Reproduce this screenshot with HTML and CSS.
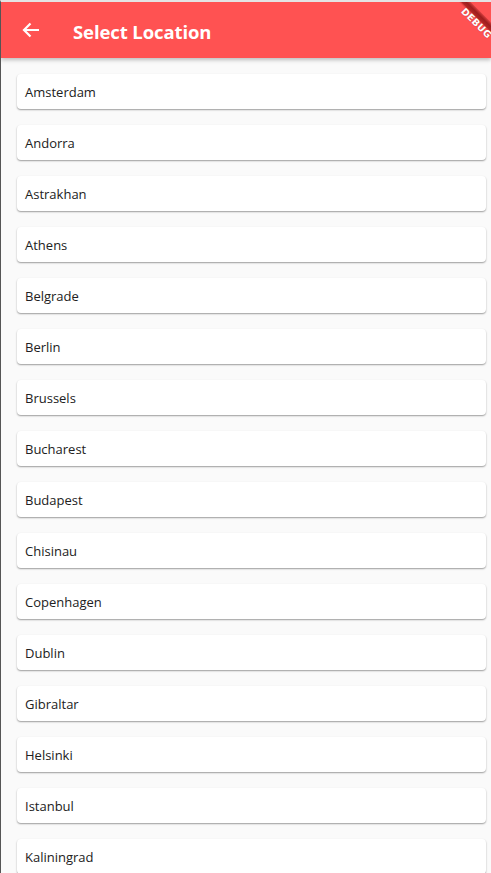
FILE: index.html
```html
<!DOCTYPE html>
<html>
<head>
<meta charset="utf-8">
<link rel="stylesheet" href="styles.css">
</head>
<body>
<div class="frame">
  <header class="appbar">
    <svg class="back" width="18" height="16" viewBox="0 0 18 16"><path d="M17 8H2.5M8.5 1.5L2 8l6.5 6.5" fill="none" stroke="#fff" stroke-width="2.2"/></svg>
    <h1 class="title">Select Location</h1>
    <div class="banner"><span>DEBUG</span></div>
  </header>
  <main class="list">
    <div class="card">Amsterdam</div>
    <div class="card">Andorra</div>
    <div class="card">Astrakhan</div>
    <div class="card">Athens</div>
    <div class="card">Belgrade</div>
    <div class="card">Berlin</div>
    <div class="card">Brussels</div>
    <div class="card">Bucharest</div>
    <div class="card">Budapest</div>
    <div class="card">Chisinau</div>
    <div class="card">Copenhagen</div>
    <div class="card">Dublin</div>
    <div class="card">Gibraltar</div>
    <div class="card">Helsinki</div>
    <div class="card">Istanbul</div>
    <div class="card">Kaliningrad</div>
  </main>
</div>
</body>
</html>
```
FILE: styles.css
```css
html, body {
  margin: 0;
  padding: 0;
  background: #fafafa;
}
body {
  width: 491px;
  height: 873px;
  overflow: hidden;
  font-family: "Open Sans", "Noto Sans", sans-serif;
}
.frame {
  border-top: 2px solid #e4e4e4;
  border-left: 1px solid #555;
  height: 871px;
  overflow: hidden;
  position: relative;
  background: #fafafa;
}
.appbar {
  position: relative;
  height: 56px;
  background: #ff5252;
  display: flex;
  align-items: center;
  box-shadow: 0 2px 4px rgba(0,0,0,0.25);
  z-index: 2;
  overflow: hidden;
}
.back {
  margin-left: 21px;
  margin-top: 0;
}
.title {
  margin: 2px 0 0 33px;
  color: #fff;
  font-size: 18.5px;
  font-weight: 700;
  letter-spacing: -0.1px;
}
.banner {
  position: absolute;
  left: 427px;
  top: 11px;
  width: 100px;
  height: 17px;
  background: linear-gradient(to bottom, rgba(120, 15, 15, 0.3) 0, rgba(140, 20, 20, 0.85) 3px, rgba(150, 22, 22, 0.75) 6px, rgba(150,22,22,0.2) 7.5px, transparent 8.5px);
  transform: rotate(45deg);
  display: flex;
  align-items: flex-end;
  justify-content: center;
  box-sizing: border-box;
  padding-bottom: 1px;
}
.banner span {
  color: #fff;
  font-size: 9.5px;
  font-weight: 700;
  letter-spacing: 0.2px;
  line-height: 10px;
  font-family: "DejaVu Sans", sans-serif;
  text-shadow: 0 0 1px rgba(120,0,0,0.6);
}
.list {
  display: flex;
  flex-direction: column;
  gap: 16px;
  padding: 16px 5px 0 16px;
}
.card {
  height: 35px;
  background: #fff;
  border-radius: 4px;
  box-shadow: 0 1px 2px rgba(0,0,0,0.28), 0 1px 1px rgba(0,0,0,0.12);
  display: flex;
  align-items: center;
  padding-left: 8px;
  font-size: 13px;
  color: #212121;
  flex-shrink: 0;
}
```
